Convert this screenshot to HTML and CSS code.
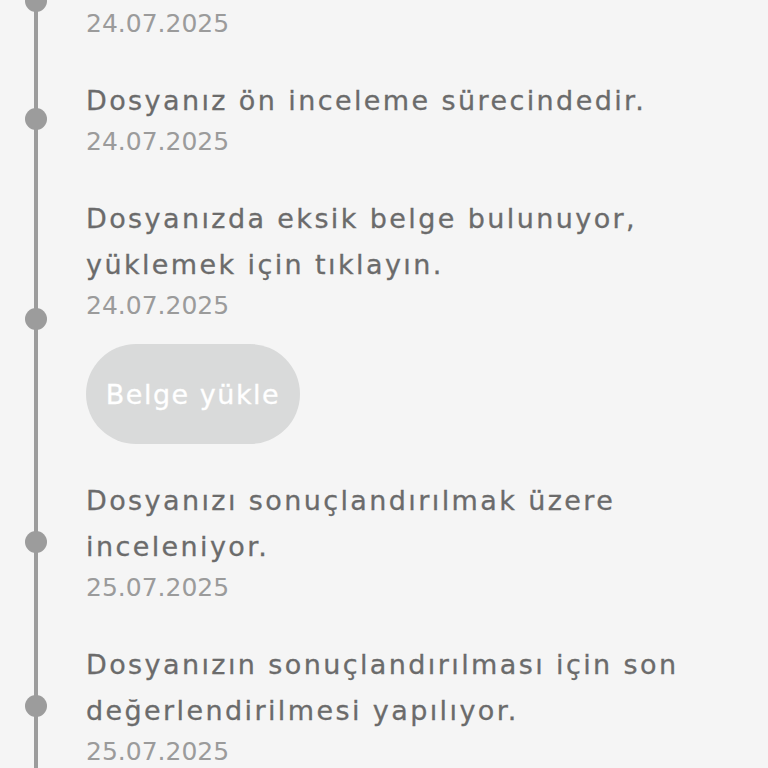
FILE: index.html
```html
<!DOCTYPE html>
<html lang="tr">
<head>
    <meta charset="UTF-8">
    <meta name="viewport" content="width=device-width, initial-scale=1.0">
    <title>Başvuru Durumu</title>
    <link rel="stylesheet" href="styles.css">
</head>
<body>
    <div class="timeline">
        <div class="item">
            <div class="rail"><span class="dot"></span></div>
            <div class="body">
                <div class="title">Dosyanız oluşturuldu.</div>
                <div class="date">24.07.2025</div>
            </div>
        </div>

        <div class="item">
            <div class="rail"><span class="dot"></span></div>
            <div class="body">
                <div class="title">Dosyanız ön inceleme sürecindedir.</div>
                <div class="date">24.07.2025</div>
            </div>
        </div>

        <div class="item has-action">
            <div class="rail"><span class="dot"></span></div>
            <div class="body">
                <div class="title">Dosyanızda eksik belge bulunuyor,<br>yüklemek için tıklayın.</div>
                <div class="date">24.07.2025</div>
                <button type="button" class="upload" disabled>Belge yükle</button>
            </div>
        </div>

        <div class="item">
            <div class="rail"><span class="dot"></span></div>
            <div class="body">
                <div class="title">Dosyanızı sonuçlandırılmak üzere<br>inceleniyor.</div>
                <div class="date">25.07.2025</div>
            </div>
        </div>

        <div class="item">
            <div class="rail"><span class="dot"></span></div>
            <div class="body">
                <div class="title">Dosyanızın sonuçlandırılması için son<br>değerlendirilmesi yapılıyor.</div>
                <div class="date">25.07.2025</div>
            </div>
        </div>
    </div>
</body>
</html>
```

FILE: styles.css
```css
body {
    margin: 0;
    font-family: "DejaVu Sans", "Open Sans", sans-serif;
    background-color: #f5f5f5;
    overflow: hidden;
}
.timeline {
    margin-top: -58px; /* ilk adim yukari kaydirilmis */
    padding-left: 34px;
}
.item {
    display: flex;
}
.rail {
    width: 4px;
    background-color: #9c9c9c;
    display: flex;
    align-items: center;
    justify-content: center;
    flex-shrink: 0;
}
.rail .dot {
    width: 22px;
    height: 22px;
    border-radius: 50%;
    background-color: #9c9c9c;
    flex-shrink: 0;
}
.body {
    margin-left: 48px;
    padding: 18px 0;
}
.item.has-action .body {
    padding-bottom: 16px;
}
.title {
    font-size: 27px;
    line-height: 46px;
    letter-spacing: 2.4px;
    color: #6b6b6b;
    -webkit-text-stroke: 0.3px #6b6b6b;
}
.date {
    font-size: 25px;
    line-height: 36px;
    color: #9b9b9b;
}
.upload {
    display: block;
    margin-top: 20px;
    width: 214px;
    height: 100px;
    border: none;
    border-radius: 50px;
    background-color: #d9dada;
    color: white;
    font-family: inherit;
    font-size: 27px;
    letter-spacing: 1.5px;
    -webkit-text-stroke: 0.3px white;
}
```
